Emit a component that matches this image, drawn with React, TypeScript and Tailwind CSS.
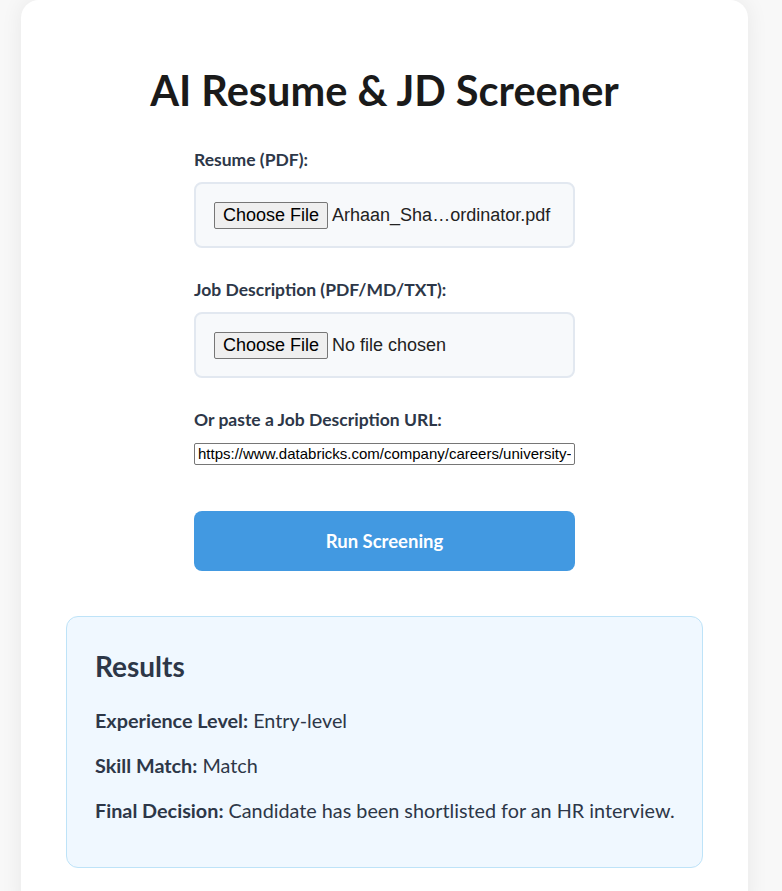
import React from 'react';

const FakeFileInput: React.FC<{ fileName: string }> = ({ fileName }) => (
  <div className="h-[66px] flex items-center px-[18px] bg-[#f7f9fb] border-2 border-[#e2e8f0] rounded-[8px]">
    <span className="flex items-center gap-[4px] font-['Liberation_Sans',Arial,sans-serif] text-[18px] text-[#222]">
      <button
        type="button"
        className="h-[27px] px-[8px] bg-[#efefef] border border-[#767676] rounded-[2px] text-black leading-none"
      >
        Choose File
      </button>
      <span>{fileName}</span>
    </span>
  </div>
);

const App: React.FC = () => {
  return (
    <div className="min-h-screen bg-[#f8f8f8] font-['Lato',sans-serif] overflow-hidden">
      <div className="ml-[21px] w-[727px] min-h-[920px] bg-white rounded-[18px] shadow-[0_0_22px_rgba(0,0,0,0.07)] pt-[66px] px-[45px] pb-10">
        <h1 className="text-center text-[41.5px] leading-[48px] font-bold text-[#1a1a1a]">
          AI Resume &amp; JD Screener
        </h1>

        <form className="w-[381px] mx-auto mt-[34px]" onSubmit={(e) => e.preventDefault()}>
          <label className="block text-[17.5px] leading-[24px] font-bold text-[#2d3748] mb-[10px]">
            Resume (PDF):
          </label>
          <FakeFileInput fileName="Arhaan_Sha…ordinator.pdf" />

          <label className="block mt-[30px] text-[17.5px] leading-[24px] font-bold text-[#2d3748] mb-[10px]">
            Job Description (PDF/MD/TXT):
          </label>
          <FakeFileInput fileName="No file chosen" />

          <label className="block mt-[30px] text-[17.5px] leading-[24px] font-bold text-[#2d3748] mb-[11px]">
            Or paste a Job Description URL:
          </label>
          <input
            type="text"
            readOnly
            value="https://www.databricks.com/company/careers/university-recruiting/data-science-intern"
            className="block w-full h-[22px] px-[3px] border border-[#767676] rounded-[2px] bg-white text-black text-[15px] font-['Liberation_Sans',Arial,sans-serif] outline-none"
          />

          <button
            type="submit"
            className="mt-[46px] w-full h-[60px] pt-[2px] rounded-[8px] bg-[#4299e1] text-white text-[18.5px] font-bold"
          >
            Run Screening
          </button>
        </form>

        <div className="mt-[45px] bg-[#f0f8ff] border border-[#bee3f8] rounded-[12px] px-[28px] pt-[32px] pb-[42px] text-[#2d3748]">
          <h2 className="text-[28px] leading-[34px] font-bold">Results</h2>
          <p className="mt-[22px] text-[19.8px] leading-[30px] whitespace-nowrap">
            <strong>Experience Level:</strong> Entry-level
          </p>
          <p className="mt-[15px] text-[19.8px] leading-[30px] whitespace-nowrap">
            <strong>Skill Match:</strong> Match
          </p>
          <p className="mt-[15px] text-[19.8px] leading-[30px] whitespace-nowrap">
            <strong>Final Decision:</strong> Candidate has been shortlisted for an HR interview.
          </p>
        </div>
      </div>
    </div>
  );
};

export default App;
